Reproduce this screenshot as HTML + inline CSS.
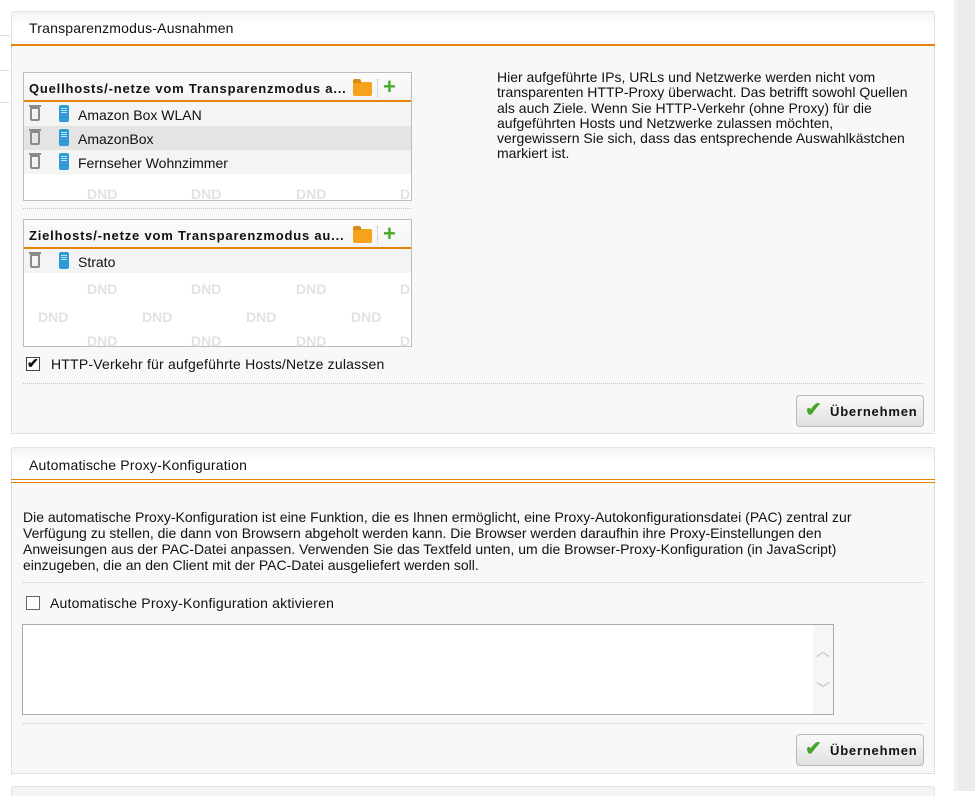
<!DOCTYPE html>
<html><head><meta charset="utf-8"><style>
*{box-sizing:border-box}
body{margin:0;width:975px;height:791px;background:#fff;font-family:"Liberation Sans",Arial,sans-serif;font-size:13px;color:#111;position:relative;overflow:hidden}
.abs{position:absolute}
.panel{position:absolute;left:11px;width:924px;background:#f8f8f8;border:1px dotted #c8c8c8;border-top:none}
.hdr{position:absolute;left:11px;width:924px;background:linear-gradient(#f4f4f4,#fff 40%);border:1px solid #e2e2e2;border-bottom:none;border-radius:3px 3px 0 0;padding-left:17px;font-size:14px;letter-spacing:.2px}
.list{position:absolute;left:23px;width:389px;background:#fff;border:1px solid #bdbdbd;overflow:hidden}
.lh{height:29px;border-bottom:2px solid #e8830a;background:linear-gradient(#fbfbfb,#f4f4f4);font-weight:bold;font-size:13px;letter-spacing:.8px;padding:8px 0 0 5px;position:relative}
.row{height:24px;position:relative;padding:5px 0 0 54px;font-size:14px}
.trash{position:absolute;left:6px;top:5px;width:10px;height:14px;border:2px solid #8a8a8a;border-radius:1px 1px 2px 2px}
.trash:before{content:"";position:absolute;left:-3px;top:-4px;width:12px;height:2px;background:#8a8a8a}
.dev{position:absolute;left:35px;top:3px;width:10px;height:17px;background:#2f9bd6;border-radius:2px}
.dev:before{content:"";position:absolute;left:2px;top:3px;width:6px;height:5px;background:repeating-linear-gradient(#bfe4f7 0 1px,transparent 1px 2px)}
.dnd{position:absolute;color:#e2e2e2;font-weight:bold;font-size:14px;letter-spacing:0}
.folder{position:absolute;width:19px;height:14px;background:#f7a21b;border-radius:2px;top:9px}
.folder:before{content:"";position:absolute;left:0;top:-3px;width:8px;height:4px;background:#d98a10;border-radius:2px 2px 0 0}
.plus{position:absolute;top:5px;color:#4ba82e;font-size:22px;font-weight:bold;line-height:18px}
.sep{position:absolute;height:0;border-top:1px dotted #c4c4c4}
.btn{position:absolute;width:128px;height:32px;border:1px solid #b8b8b8;border-radius:4px;background:linear-gradient(#fafafa,#e0e0e0);font-weight:bold;font-size:13px;letter-spacing:.8px;padding:8px 0 0 33px}
.chk{position:absolute;width:20px;height:20px;left:8px;top:4px;color:#47a52f;font-size:20px;line-height:20px}
.cb{position:absolute;width:14px;height:14px;border:1px solid #555;background:#fff}
</style></head><body>
<div class="abs" style="left:0;top:35px;width:10px;border-top:1px solid #ddd"></div>
<div class="abs" style="left:0;top:70px;width:10px;border-top:1px solid #ddd"></div>
<div class="abs" style="left:0;top:102px;width:10px;border-top:1px solid #ddd"></div>
<div class="abs" style="left:953px;top:0;width:22px;height:791px;background:linear-gradient(90deg,#f7f7f7,#ebebeb 30%)"></div>

<div class="hdr" style="top:11px;height:35px;padding-top:8px">Transparenzmodus-Ausnahmen</div>
<div class="abs" style="left:11px;top:44px;width:924px;height:2px;background:#e8830a"></div>
<div class="panel" style="top:46px;height:388px"></div>

<div class="list" style="top:72px;height:129px">
 <div class="lh">Quellhosts/-netze vom Transparenzmodus a...<div class="folder" style="left:329px"></div><div class="abs" style="left:353px;top:6px;height:18px;border-left:1px dotted #bbb"></div><div class="plus" style="left:359px">+</div></div>
 <div class="row" style="background:#f4f4f4"><div class="trash"></div><div class="dev"></div>Amazon Box WLAN</div>
 <div class="row" style="background:#e4e4e4"><div class="trash"></div><div class="dev"></div>AmazonBox</div>
 <div class="row" style="background:#f4f4f4"><div class="trash"></div><div class="dev"></div>Fernseher Wohnzimmer</div>
 <div class="dnd" style="left:63px;top:113px">DND</div><div class="dnd" style="left:167px;top:113px">DND</div><div class="dnd" style="left:272px;top:113px">DND</div><div class="dnd" style="left:376px;top:113px">D</div>
</div>
<div class="sep" style="left:23px;top:208px;width:389px"></div>

<div class="list" style="top:219px;height:128px">
 <div class="lh">Zielhosts/-netze vom Transparenzmodus au...<div class="folder" style="left:329px"></div><div class="abs" style="left:353px;top:6px;height:18px;border-left:1px dotted #bbb"></div><div class="plus" style="left:359px">+</div></div>
 <div class="row" style="background:#f4f4f4"><div class="trash"></div><div class="dev"></div>Strato</div>
 <div class="dnd" style="left:63px;top:61px">DND</div><div class="dnd" style="left:167px;top:61px">DND</div><div class="dnd" style="left:272px;top:61px">DND</div><div class="dnd" style="left:376px;top:61px">D</div>
 <div class="dnd" style="left:14px;top:89px">DND</div><div class="dnd" style="left:118px;top:89px">DND</div><div class="dnd" style="left:222px;top:89px">DND</div><div class="dnd" style="left:327px;top:89px">DND</div>
 <div class="dnd" style="left:63px;top:113px">DND</div><div class="dnd" style="left:167px;top:113px">DND</div><div class="dnd" style="left:272px;top:113px">DND</div><div class="dnd" style="left:376px;top:113px">D</div>
</div>
<div class="cb" style="left:26px;top:357px;border-color:#444"></div>
<div class="abs" style="left:27px;top:355px;font-size:14px;font-weight:bold">✔</div>
<div class="abs" style="left:51px;top:356px;font-size:14px;letter-spacing:.2px">HTTP-Verkehr für aufgeführte Hosts/Netze zulassen</div>

<div class="abs" style="left:497px;top:70px;white-space:nowrap;font-size:14px;line-height:15.3px">Hier aufgeführte IPs, URLs und Netzwerke werden nicht vom<br>transparenten HTTP-Proxy überwacht. Das betrifft sowohl Quellen<br>als auch Ziele. Wenn Sie HTTP-Verkehr (ohne Proxy) für die<br>aufgeführten Hosts und Netzwerke zulassen möchten,<br>vergewissern Sie sich, dass das entsprechende Auswahlkästchen<br>markiert ist.</div>

<div class="sep" style="left:23px;top:383px;width:901px"></div>
<div class="btn" style="left:796px;top:395px"><span class="chk">✔</span>Übernehmen</div>

<div class="hdr" style="top:447px;height:35px;padding-top:9px">Automatische Proxy-Konfiguration</div>
<div class="abs" style="left:11px;top:479px;width:924px;height:1px;background:#e8830a"></div>
<div class="abs" style="left:11px;top:482px;width:924px;height:1px;background:#e8830a"></div>
<div class="panel" style="top:483px;height:291px"></div>
<div class="abs" style="left:23px;top:509px;width:880px;font-size:14px;line-height:16px">Die automatische Proxy-Konfiguration ist eine Funktion, die es Ihnen ermöglicht, eine Proxy-Autokonfigurationsdatei (PAC) zentral zur Verfügung zu stellen, die dann von Browsern abgeholt werden kann. Die Browser werden daraufhin ihre Proxy-Einstellungen den Anweisungen aus der PAC-Datei anpassen. Verwenden Sie das Textfeld unten, um die Browser-Proxy-Konfiguration (in JavaScript) einzugeben, die an den Client mit der PAC-Datei ausgeliefert werden soll.</div>
<div class="sep" style="left:23px;top:582px;width:901px"></div>
<div class="cb" style="left:26px;top:596px;border-color:#666"></div>
<div class="abs" style="left:50px;top:595px;font-size:14px;letter-spacing:.2px">Automatische Proxy-Konfiguration aktivieren</div>
<div class="abs" style="left:22px;top:624px;width:812px;height:91px;background:#fff;border:1px solid #aaa"></div>
<div class="abs" style="left:813px;top:625px;width:20px;height:89px;background:#f6f6f6;color:#bbb;font-size:14px;text-align:center"><div style="margin-top:16px">︿</div><div style="margin-top:18px">﹀</div></div>
<div class="sep" style="left:23px;top:723px;width:901px"></div>
<div class="btn" style="left:796px;top:734px"><span class="chk">✔</span>Übernehmen</div>

<div class="hdr" style="top:786px;height:10px;background:#f4f4f4"></div>
</body></html>
